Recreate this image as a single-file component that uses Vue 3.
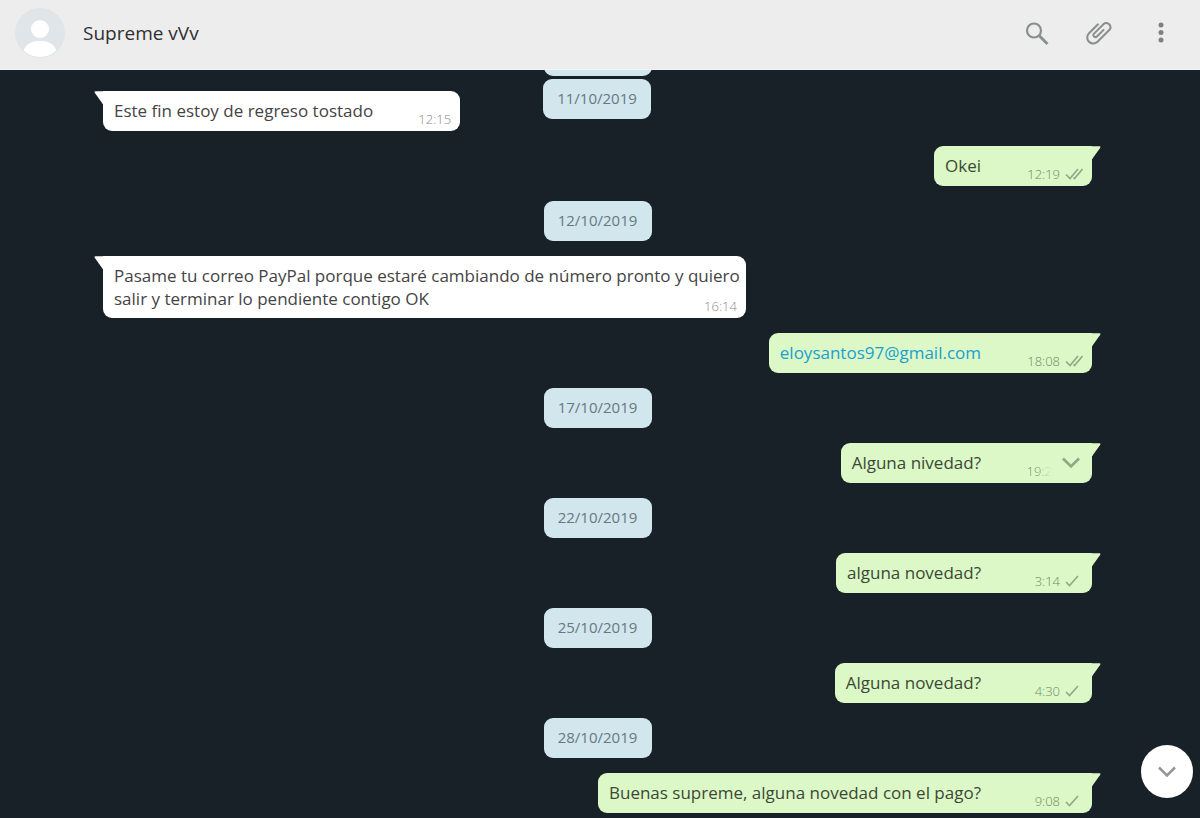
<script setup>
const rows = [
  { type: 'date', text: '' },
  { type: 'in', text: 'Este fin estoy de regreso tostado', time: '12:15' },
  { type: 'out', text: 'Okei', time: '12:19', ticks: 2 },
  { type: 'date', text: '12/10/2019' },
  {
    type: 'in',
    text: 'Pasame tu correo PayPal porque estaré cambiando de número pronto y quiero salir y terminar lo pendiente contigo OK',
    time: '16:14',
  },
  { type: 'out', text: 'eloysantos97@gmail.com', time: '18:08', ticks: 2, link: true },
  { type: 'date', text: '17/10/2019' },
  { type: 'out', text: 'Alguna nivedad?', time: '19:2', hovered: true },
  { type: 'date', text: '22/10/2019' },
  { type: 'out', text: 'alguna novedad?', time: '3:14', ticks: 1 },
  { type: 'date', text: '25/10/2019' },
  { type: 'out', text: 'Alguna novedad?', time: '4:30', ticks: 1 },
  { type: 'date', text: '28/10/2019' },
  { type: 'out', text: 'Buenas supreme, alguna novedad con el pago?', time: '9:08', ticks: 1 },
]
</script>

<template>
  <div class="app">
    <header class="header">
      <svg class="avatar" viewBox="0 0 50 50" aria-hidden="true">
        <defs>
          <clipPath id="avatar-clip"><circle cx="25" cy="25" r="24" /></clipPath>
        </defs>
        <circle cx="25" cy="25" r="25" fill="#dfe5e8" />
        <g clip-path="url(#avatar-clip)" fill="#fff">
          <circle cx="25" cy="21" r="9" />
          <path d="M8 44C11 35 17 33 25 33s14 2 17 11v6H8z" />
        </g>
      </svg>
      <h1 class="name">Supreme vVv</h1>
      <div class="actions">
        <button class="icon-btn" type="button" aria-label="Buscar">
          <svg viewBox="0 0 30 30" width="30" height="30" fill="none" stroke="#8b8e8f">
            <circle cx="12" cy="12.500" r="7" stroke-width="2.200" />
            <path d="M17 17.500l8.500 8.500" stroke-width="2.800" />
          </svg>
        </button>
        <button class="icon-btn" type="button" aria-label="Adjuntar">
          <svg viewBox="0 0 24 24" width="30" height="30">
            <path fill="#8b8e8f" d="M1.816 15.556v.002c0 1.502.584 2.912 1.646 3.972s2.472 1.647 3.974 1.647a5.580 5.580 0 0 0 3.972-1.645l9.547-9.548c.769-.768 1.147-1.767 1.058-2.817-.079-.968-.548-1.927-1.319-2.698-1.594-1.592-4.068-1.711-5.517-.262l-7.916 7.915c-.881.881-.792 2.250.214 3.261.959.958 2.423 1.053 3.263.215l5.511-5.512c.280-.280.267-.722.053-.936l-.244-.244c-.191-.191-.567-.349-.957.040l-5.506 5.506c-.180.180-.635.127-.976-.214-.098-.097-.576-.613-.213-.973l7.915-7.917c.818-.817 2.267-.699 3.230.262.500.501.802 1.100.849 1.685.051.573-.156 1.111-.589 1.543l-9.547 9.549a3.970 3.970 0 0 1-2.829 1.171 3.975 3.975 0 0 1-2.830-1.173 3.973 3.973 0 0 1-1.172-2.828c0-1.071.415-2.076 1.172-2.830l7.209-7.211c.157-.157.264-.579.028-.814L11.500 4.360a.572.572 0 0 0-.834.018l-7.205 7.207a5.577 5.577 0 0 0-1.645 3.971z" />
          </svg>
        </button>
        <button class="icon-btn" type="button" aria-label="Menú">
          <svg viewBox="0 0 30 30" width="30" height="30" fill="#7e8182">
            <circle cx="15" cy="7" r="2.500" />
            <circle cx="15" cy="14.500" r="2.500" />
            <circle cx="15" cy="22" r="2.500" />
          </svg>
        </button>
      </div>
    </header>

    <main class="chat">
      <div class="chip sticky-date">11/10/2019</div>
      <template v-for="(row, i) in rows" :key="i">
        <div v-if="row.type === 'date'" class="chip">{{ row.text }}</div>
        <div v-else class="bubble" :class="row.type">
          <svg class="tail" viewBox="0 0 10 14" width="9" height="13" aria-hidden="true">
            <path d="M0 0h8.500q1.500.400.700 1.800L1 13v1H0z" />
          </svg>
          <a v-if="row.link" class="mail" :href="'mailto:' + row.text">{{ row.text }}</a>
          <span v-else>{{ row.text }}</span>
          <span class="spacer"></span>
          <span class="meta">
            <span :class="{ faded: row.hovered }">{{ row.time }}</span>
            <svg v-if="row.ticks" viewBox="0 0 18 14" width="18" height="14" fill="none" stroke="#8fa886" stroke-width="1.600" aria-hidden="true">
              <template v-if="row.ticks === 2">
                <path d="M1 7.500l4 4L13 2" />
                <path d="M8.500 10.500l1 1L17.500 2" />
              </template>
              <path v-else d="M1 8l3.500 3.500L13 2" />
            </svg>
          </span>
          <button v-if="row.hovered" class="menu" type="button" aria-label="Opciones del mensaje">
            <svg viewBox="0 0 20 14" width="20" height="14" fill="none" stroke="#8fa886" stroke-width="2.600">
              <path d="M2 2.500l8 8 8-8" />
            </svg>
          </button>
        </div>
      </template>
      <button class="scroll-down" type="button" aria-label="Ir al final">
        <svg viewBox="0 0 20 14" width="20" height="14" fill="none" stroke="#949697" stroke-width="2.500">
          <path d="M2 2.500l8 8 8-8" />
        </svg>
      </button>
    </main>
  </div>
</template>

<style>
body {
  margin: 0;
}
</style>

<style scoped>
.app {
  display: flex;
  flex-direction: column;
  height: 100vh;
  background: #172127;
  color: #303030;
  font-family: "Open Sans", "Noto Sans", sans-serif;
  font-size: 17px;
}
button {
  padding: 0;
  border: 0;
  background: none;
  cursor: pointer;
}
svg {
  display: block;
}
.header {
  display: flex;
  flex: none;
  align-items: center;
  box-sizing: border-box;
  height: 70px;
  padding: 0 24px 4px 15px;
  background: #ededed;
  border-bottom: 1px solid #f5f5f5;
}
.avatar {
  width: 50px;
  height: 50px;
}
.name {
  flex: 1;
  margin: 0 0 0 18px;
  font-size: 19px;
  font-weight: 400;
  line-height: 26px;
}
.actions {
  display: flex;
  gap: 32px;
}
.chat {
  position: relative;
  display: flex;
  flex: 1;
  flex-direction: column;
  justify-content: flex-end;
  gap: 15px;
  min-height: 0;
  padding: 0 9% 5px 103px;
  overflow: hidden;
}
.chip {
  flex: none;
  align-self: center;
  box-sizing: border-box;
  width: 108px;
  height: 40px;
  border-radius: 9px;
  background: #d2e6ed;
  color: #667981;
  font-size: 15px;
  line-height: 39px;
  text-align: center;
}
.sticky-date {
  position: absolute;
  top: 9px;
  left: 50%;
  z-index: 1;
  margin-left: -57px;
}
.bubble {
  position: relative;
  flex: none;
  box-sizing: border-box;
  max-width: 65%;
  min-height: 40px;
  padding: 8px 4px 8px 11px;
  border-radius: 9px;
  line-height: 23px;
}
.in {
  align-self: flex-start;
  border-top-left-radius: 0;
  background: #fff;
  color: #444;
}
.out {
  align-self: flex-end;
  border-top-right-radius: 0;
  background: #dcf8c6;
  color: #3b4836;
}
.tail {
  position: absolute;
  top: 0;
}
.out .tail {
  left: 100%;
  fill: #dcf8c6;
}
.in .tail {
  right: 100%;
  fill: #fff;
  transform: scaleX(-1);
}
.in .spacer,
.out .spacer {
  display: inline-block;
  width: 83px;
  height: 10px;
}
.out .spacer {
  width: 107px;
}
.mail {
  color: #1b9fd0;
  text-decoration: none;
}
.meta {
  position: absolute;
  right: 9px;
  bottom: 4px;
  display: flex;
  align-items: center;
  gap: 5px;
  color: #8a8a8a;
  font-size: 13px;
  font-weight: 300;
  line-height: 16px;
}
.out .meta {
  color: #6f8867;
}
.faded {
  margin-right: 31px;
  background: linear-gradient(to right, #6f8867 40%, #dcf8c6);
  background-clip: text;
  color: transparent;
}
.menu {
  position: absolute;
  top: 13px;
  right: 11px;
}
.scroll-down {
  position: absolute;
  right: 7px;
  bottom: 20px;
  display: flex;
  align-items: center;
  justify-content: center;
  width: 52px;
  height: 53px;
  border-radius: 50%;
  background: #fff;
}
</style>
